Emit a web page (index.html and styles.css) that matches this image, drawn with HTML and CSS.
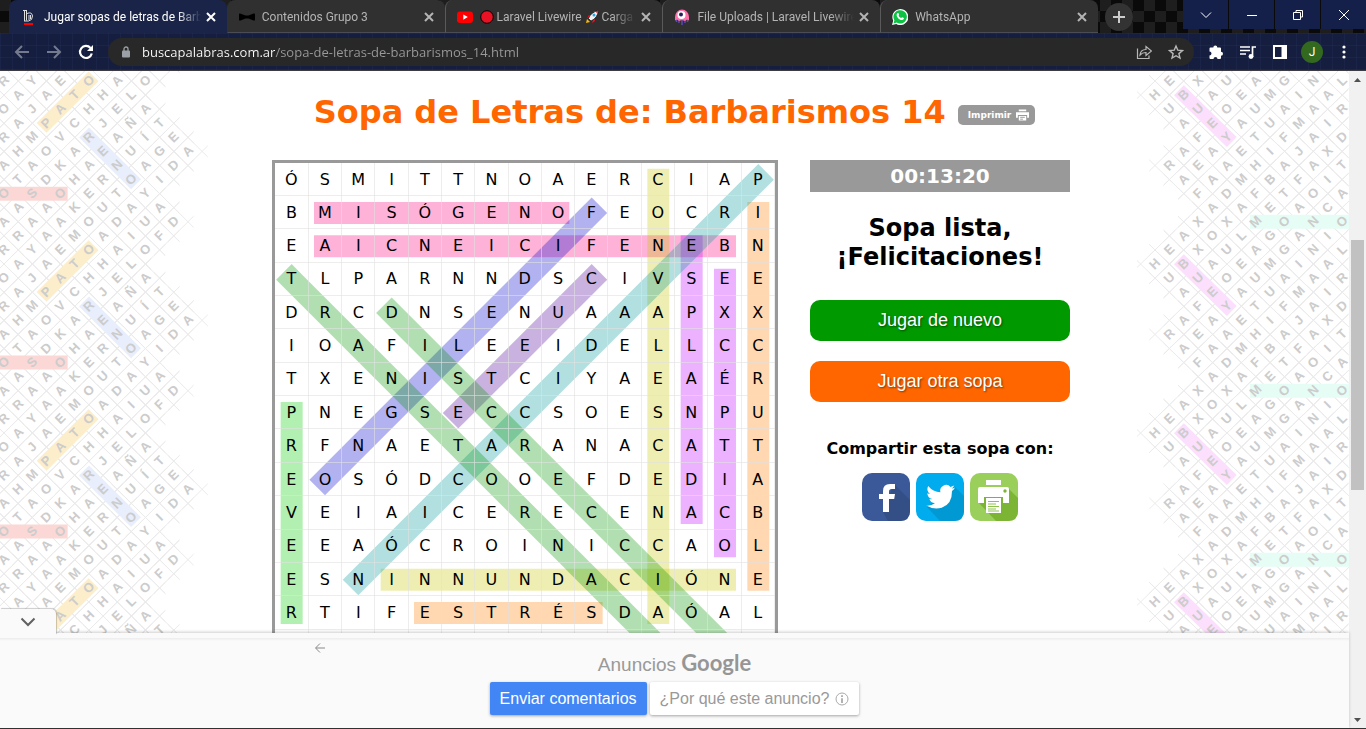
FILE: index.html
```html
<!DOCTYPE html>
<html lang="es">
<head>
<meta charset="utf-8">
<title>Jugar sopas de letras de Barbarismos 14</title>
<link rel="stylesheet" href="styles.css">
</head>
<body>
<header class="browser">
  <div class="tabstrip">
    <div class="tabs">
      <div class="tab tab-active">
        <svg class="favicon" viewBox="0 0 16 16"><g fill="none" stroke="#ddd" stroke-width="1"><path d="M3.5 1v11M5.500 1v10.500M2 1.500h4M6 4.500q5-2 5.500 2.500 0 4.500-4 5H3M8 6v5M9.500 6v4"/></g><path d="M3 14h9v2H3z" fill="#f00"/></svg>
        <span class="tab-title">Jugar sopas de letras de Barb</span>
        <button class="tab-close" aria-label="Cerrar"><svg viewBox="0 0 10 10"><path d="M1 1l8 8M9 1l-8 8"/></svg></button>
      </div>
      <div class="tab">
        <svg class="favicon" viewBox="0 0 16 16"><path d="M1 4.500Q0 4 0 5.500v5Q0 12 1.500 11.500L6.500 9.500h3l5 2q1.500.5 1.500-1v-5Q16 4 14.500 4.500l-5 2h-3z" fill="#000"/></svg>
        <span class="tab-title">Contenidos Grupo 3</span>
        <button class="tab-close" aria-label="Cerrar"><svg viewBox="0 0 10 10"><path d="M1 1l8 8M9 1l-8 8"/></svg></button>
      </div>
      <div class="tab">
        <svg class="favicon" viewBox="0 0 16 16"><rect y="2.500" width="16" height="11.500" rx="3" fill="#f00"/><path d="M6.300 5.500v5.200L10.800 8.100z" fill="#fff"/></svg>
        <span class="tab-title"><svg class="emoji" viewBox="0 0 14 14"><circle cx="7" cy="7" r="6.300" fill="#e81224" stroke="#000"/></svg> Laravel Livewire <svg class="emoji" viewBox="0 0 14 14"><path d="M1 13l1-4 3 3z" fill="#ffb900"/><path d="M2 8l2-3 3 1zM9 7l1 4-3 2z" fill="#e81224"/><path d="M3.500 8.500Q6 2 13.500.5 12.500 8 6 11z" fill="#f2f2f2" stroke="#111" stroke-width=".7"/><path d="M10.500 1.500l2.800-1-1 3z" fill="#e81224"/><circle cx="9" cy="5" r="1.500" fill="#27a9e8"/></svg> Carga</span>
        <button class="tab-close" aria-label="Cerrar"><svg viewBox="0 0 10 10"><path d="M1 1l8 8M9 1l-8 8"/></svg></button>
      </div>
      <div class="tab">
        <svg class="favicon" viewBox="0 0 16 16"><path d="M2.500 9v4M5 10v4M8 10v6M11 10v4M13.500 9v4" stroke="#5a4bb5" stroke-width="1.500"/><path d="M1 11.500V8a7 7.500 0 0 1 14 0v3.500l-2-1-2 1.500-3-1-3 1-2-1.500z" fill="#fb70a9"/><circle cx="7.500" cy="6" r="4" fill="#fff"/><circle cx="7" cy="5.500" r="2" fill="#251f5c"/></svg>
        <span class="tab-title">File Uploads | Laravel Livewire</span>
        <button class="tab-close" aria-label="Cerrar"><svg viewBox="0 0 10 10"><path d="M1 1l8 8M9 1l-8 8"/></svg></button>
      </div>
      <div class="tab">
        <svg class="favicon" viewBox="0 0 16 16"><path d="M0 16l1.200-4.300A8 8 0 1 1 4.300 15z" fill="#fff"/><path d="M1.500 14.500l.9-3.200A6.700 6.700 0 1 1 4.700 13.600z" fill="#0cc143"/><path d="M5.300 4.200c.5-.5 1-.3 1.200.1l.6 1.400c0 .4-.5.7-.6 1 .6 1.200 1.500 2 2.700 2.400.4-.2.700-.9 1.100-.8l1.600.8c.3.9-.6 2-1.800 2-2.800-.1-5.500-3-5.500-5.200 0-.6.300-1.300.7-1.700z" fill="#fff"/></svg>
        <span class="tab-title">WhatsApp</span>
        <button class="tab-close" aria-label="Cerrar"><svg viewBox="0 0 10 10"><path d="M1 1l8 8M9 1l-8 8"/></svg></button>
      </div>
    </div>
    <button class="new-tab" aria-label="Nueva pestaña"><svg viewBox="0 0 12 12"><path d="M6 0v12M0 6h12"/></svg></button>
    <div class="window-buttons">
      <button aria-label="Buscar pestañas"><svg viewBox="0 0 12 12"><path d="M1 3.500l5 5 5-5"/></svg></button>
      <button aria-label="Minimizar"><svg viewBox="0 0 12 12"><path d="M1 6.500h10"/></svg></button>
      <button aria-label="Restaurar"><svg viewBox="0 0 12 12"><path d="M1.500 3.500h7v7h-7zM4 3V1.500h6.500V8H9"/></svg></button>
      <button aria-label="Cerrar ventana"><svg viewBox="0 0 12 12"><path d="M1 1l10 10M11 1L1 11"/></svg></button>
    </div>
  </div>
  <div class="toolbar">
    <button class="tool dim" aria-label="Atrás"><svg viewBox="0 0 16 16"><path d="M15 8H2M8 2L2 8l6 6"/></svg></button>
    <button class="tool dim" aria-label="Adelante"><svg viewBox="0 0 16 16"><path d="M1 8h13M8 2l6 6-6 6"/></svg></button>
    <button class="tool" aria-label="Recargar"><svg viewBox="0 0 16 16"><path d="M13.800 9.500A6 6 0 1 1 12.500 4" stroke-width="2.200"/><path d="M15 1v6H9z" fill="#fff" stroke="none"/></svg></button>
    <div class="omnibox">
      <svg class="lock" viewBox="0 0 10 12"><rect x="1" y="4.500" width="8" height="7" rx="1" fill="#9aa0a6"/><path d="M3 5V3a2 2 0 0 1 4 0v2" fill="none" stroke="#9aa0a6" stroke-width="1.300"/></svg>
      <input class="address" type="text" aria-label="Dirección" value="buscapalabras.com.ar/sopa-de-letras-de-barbarismos_14.html">
      <button class="tool soft" aria-label="Compartir"><svg viewBox="0 0 16 16"><path d="M1.500 4.500v10h11.500v-3M4 11q.5-5.500 6-5.500V2.500L15.500 7 10 11.500V8.500Q6.500 8.300 4 11z" stroke-width="1.200"/></svg></button>
      <button class="tool soft" aria-label="Favorito"><svg viewBox="0 0 16 16"><path d="M8 2l1.800 4.200 4.600.4-3.500 3 1.100 4.500L8 11.700l-4 2.400 1.100-4.500-3.500-3 4.600-.4z" stroke-width="1.400"/></svg></button>
    </div>
    <button class="tool" aria-label="Extensiones"><svg viewBox="0 0 16 16"><path d="M1.500 4.500q0-1 1-1H5.300a2 2 0 1 1 4 0H12q1 0 1 1v3.200a2 2 0 1 1 0 4V14q0 1-1 1H9.500a2 2 0 1 0-4 0H2.500q-1 0-1-1v-2.500a2 2 0 1 0 0-4z" fill="#fff" stroke="none"/></svg></button>
    <button class="tool" aria-label="Control multimedia"><svg viewBox="0 0 16 16"><path d="M0 3h10M0 6.500h10M0 10h6M12.500 13V3H16" stroke-width="1.700"/><circle cx="11" cy="12.500" r="2.400" fill="#fff" stroke="none"/></svg></button>
    <button class="tool" aria-label="Panel lateral"><svg viewBox="0 0 16 16"><path d="M2 2h12v12H2z" stroke-width="2"/><path d="M9.500 2H15v12H9.500z" fill="#fff" stroke="none"/></svg></button>
    <button class="avatar" aria-label="Perfil">J</button>
    <button class="tool" aria-label="Menú"><svg viewBox="0 0 16 16"><g fill="#fff" stroke="none"><circle cx="8" cy="3" r="1.600"/><circle cx="8" cy="8" r="1.600"/><circle cx="8" cy="13" r="1.600"/></g></svg></button>
  </div>
</header>

<div class="viewport">
  <div class="column">
    <main class="page">
      <svg class="wallpaper wallpaper-left" id="left" aria-hidden="true"></svg>
      <svg class="wallpaper wallpaper-right" id="right" aria-hidden="true"></svg>
      <div class="heading">
        <h1>Sopa de Letras de: Barbarismos 14</h1>
        <button class="print">Imprimir <svg viewBox="0 0 14 12"><path d="M3 0h8v2H3zM0 3h14v6h-2V6H2v3H0zM3 7h8v5H3z" fill="#fff"/><path d="M4.500 8.500h5M4.500 10.500h3" stroke="#999"/></svg></button>
      </div>
      <div class="game">
        <div class="board">
          <svg class="marks" id="marks" viewBox="0 0 15 15" aria-hidden="true"></svg>
          <table class="letters" id="letters"></table>
        </div>
        <aside class="side">
          <div class="timer">00:13:20</div>
          <h2>Sopa lista,<br>¡Felicitaciones!</h2>
          <button class="play play-green">Jugar de nuevo</button>
          <button class="play play-orange">Jugar otra sopa</button>
          <h3>Compartir esta sopa con:</h3>
          <div class="share">
            <a href="#facebook" aria-label="Facebook"><svg viewBox="0 0 48 48"><rect width="48" height="48" rx="10" fill="#3b5998"/><path d="M32 11l16 16v11q0 10-10 10H26l-5-9z" fill="#344e86"/><path d="M21 39V26h-4v-5h4v-3q0-7 7-7h5v5h-3.500q-2.500 0-2.500 2.500V21h6l-.8 5H27v13z" fill="#fff"/></svg></a>
            <a href="#twitter" aria-label="Twitter"><svg viewBox="0 0 48 48"><rect width="48" height="48" rx="10" fill="#00aced"/><path d="M38 13l10 10v15q0 10-10 10H24L11 34z" fill="#0099d4"/><path d="M39 14.500q-1.500.9-3.400 1.100 1.900-1.100 2.600-3.100-1.700 1-3.700 1.400A5.900 5.900 0 0 0 24.400 19.300Q17 19 12.200 13q-2.500 4.700 1.800 7.900-1.400 0-2.700-.7.200 4.500 4.800 5.800-1.300.4-2.700.1 1.300 3.700 5.500 4.100-3.700 2.800-8.700 2.400 7.300 4.400 15.500 2.200Q36.300 31 36 18q1.900-1.300 3-3.500z" fill="#fff"/></svg></a>
            <a href="#print" aria-label="Imprimir"><svg viewBox="0 0 48 48"><rect width="48" height="48" rx="10" fill="#9bcf5c"/><path d="M39 16l9 9v13q0 10-10 10H26L9 30l7-16z" fill="#7cb534"/><path d="M16 7h15v5H16zM10 14h27q2 0 2 2v14h-6v-6H14v6H8V16q0-2 2-2zM16 25h15v15H16z" fill="#fff"/><circle cx="35" cy="18" r="1.700" fill="#7cb534"/><path d="M18 28.500h11M18 31h8M18 33.500h11M18 36h8M18 38h11" stroke="#8dc34a" stroke-width="1"/></svg></a>
          </div>
        </aside>
      </div>
    </main>
    <section class="ad">
      <button class="ad-toggle" aria-label="Ocultar anuncio"><svg viewBox="0 0 16 10"><path d="M1.500 1.500L8 8l6.500-6.500"/></svg></button>
      <button class="ad-back" aria-label="Volver"><svg viewBox="0 0 10 10"><path d="M10 5H1M5 .5L.5 5 5 9.500"/></svg></button>
      <div class="ad-title">Anuncios <span class="brand">Google</span></div>
      <div class="ad-actions">
        <button class="ad-send">Enviar comentarios</button>
        <button class="ad-why">¿Por qué este anuncio? <svg viewBox="0 0 14 14"><circle cx="7" cy="7" r="6"/><path d="M7 6.200V11M7 3.200v1.800" stroke-width="1.800"/></svg></button>
      </div>
    </section>
  </div>
  <div class="scrollbar">
    <svg class="arrow" viewBox="0 0 17 17"><path d="M5 11l3.500-4 3.500 4z"/></svg>
    <div class="space-above"></div>
    <div class="thumb"></div>
    <div class="space-below"></div>
    <svg class="arrow" viewBox="0 0 17 17"><path d="M5 7l3.500 4L12 7z"/></svg>
  </div>
</div>
<script src="app.js"></script>
</body>
</html>
```

FILE: styles.css
```css
* { box-sizing: border-box; }
body {
  margin: 0;
  height: 100vh;
  display: flex;
  flex-direction: column;
  overflow: hidden;
  background: #fff;
  font-family: "DejaVu Sans", Verdana, sans-serif;
  color: #000;
}
button { border: 0; padding: 0; margin: 0; background: none; font: inherit; color: inherit; }
h1, h2, h3 { margin: 0; }
svg { display: block; flex: none; }

/* browser frame */
.browser { font-family: Roboto, "Open Sans", sans-serif; flex: none; }
.tabstrip {
  height: 33px;
  display: flex;
  align-items: flex-start;
  padding-left: 9px;
  background: repeating-conic-gradient(#0a0a0a 0 25%, #1e1e1e 0 50%) 0 0 / 22px 22px;
}
.tabs { flex: 0 1 1089px; min-width: 0; display: flex; }
.tab {
  flex: 1 1 0;
  min-width: 0;
  height: 33px;
  display: flex;
  align-items: center;
  padding: 1px 11px 0 11px;
  background: #303030;
  border-bottom: 1px solid #4a4d55;
  border-left: 1px solid #5a5a5a;
  border-radius: 8px 8px 0 0;
  color: #b4b4b4;
}
.tab-active { background: #1a2448; border-color: #1a2448; color: #fff; }
.tab-active + .tab { border-left-color: #303030; }
.favicon { width: 16px; height: 16px; }
.tab-title {
  flex: 1;
  min-width: 0;
  height: 20px;
  margin: 0 5px 0 7px;
  font-size: 12px;
  line-height: 20px;
  white-space: nowrap;
  overflow: hidden;
  -webkit-mask-image: linear-gradient(90deg, #000 calc(100% - 24px), transparent);
  mask-image: linear-gradient(90deg, #000 calc(100% - 24px), transparent);
}
.emoji { display: inline-block; width: 14px; height: 14px; vertical-align: -3px; }
.tab-close svg { width: 10px; height: 10px; fill: none; stroke: currentColor; stroke-width: 2; }
.new-tab {
  flex: none;
  width: 28px;
  height: 28px;
  margin: 3px 0 0 7px;
  border-radius: 50%;
  background: #333;
  display: grid;
  place-items: center;
}
.new-tab svg { width: 12px; height: 12px; stroke: #ccc; stroke-width: 2; }
.window-buttons { flex: none; margin-left: auto; display: flex; gap: 1px; background: #0a0a0a; }
.window-buttons button { width: 45px; height: 29px; display: grid; place-items: center; background: #15204a; }
.window-buttons svg { width: 12px; height: 12px; fill: none; stroke: #fff; stroke-width: 1; }
.toolbar {
  height: 38px;
  display: flex;
  align-items: center;
  gap: 16px;
  padding: 0 14px;
  background-color: #151e3f;
  background-image: linear-gradient(rgba(70, 90, 150, .1) 1px, transparent 1px), linear-gradient(90deg, rgba(70, 90, 150, .1) 1px, transparent 1px);
  background-size: 12px 12px;
  border-bottom: 1px solid #3c3c42;
}
.tool { flex: none; width: 16px; height: 16px; }
.tool svg { width: 16px; height: 16px; fill: none; stroke: #fff; stroke-width: 2; }
.dim svg { stroke: #747b8f; }
.soft svg { stroke: #b8b8b8; }
.omnibox {
  flex: 1;
  min-width: 0;
  height: 28px;
  margin: 0 -2px 0 -2px;
  padding: 0 10px 0 13px;
  border-radius: 14px;
  background: #282828;
  display: flex;
  align-items: center;
  gap: 16px;
}
.lock { width: 10px; height: 12px; margin-right: -5px; }
.address {
  flex: 1;
  min-width: 0;
  height: 20px;
  border: 0;
  padding: 0;
  font: 13px/20px "Open Sans", "Noto Sans", sans-serif;
  background: linear-gradient(90deg, #fff 133px, #9a9a9a 133px);
  -webkit-background-clip: text;
  background-clip: text;
  color: transparent;
}
.avatar {
  flex: none;
  width: 22px;
  height: 22px;
  margin: 0 -3px;
  border-radius: 50%;
  background: #33691e;
  color: #fff;
  font-size: 12px;
  line-height: 22px;
}

/* page */
.viewport { flex: 1; min-height: 0; display: flex; border-bottom: 1px solid #333; }
.column { flex: 1; min-width: 0; display: flex; flex-direction: column; }
.page { flex: 1; min-height: 0; overflow: hidden; position: relative; }
.wallpaper { position: absolute; top: 0; width: 212px; height: 600px; z-index: -1; overflow: hidden; }
.wallpaper-left { left: 0; }
.wallpaper-right { right: 0; }
.wallpaper text { font: bold 13px "Liberation Sans", Arial, sans-serif; fill: #ccc; }
.wallpaper .grid { fill: none; stroke: #ebebeb; stroke-width: 1; }
.wallpaper .mark { fill: none; stroke-width: 14; }

.heading { display: flex; justify-content: center; align-items: center; gap: 12px; padding-top: 21px; }
.heading h1 { font-size: 32px; line-height: 40px; color: #f60; white-space: nowrap; }
.print {
  height: 20px;
  margin-top: 5px;
  padding: 0 6px 0 10px;
  border-radius: 5px;
  background: #999;
  color: #fff;
  font-size: 9px;
  font-weight: bold;
  display: flex;
  align-items: center;
  gap: 5px;
}
.print svg { width: 13px; height: 12px; }
.game { display: flex; justify-content: center; gap: 32px; padding: 28px 7px 0 0; }
.board { position: relative; flex: none; border: 3px solid #999; }
.marks { position: absolute; inset: 0; width: 100%; height: 100%; }
.marks line { stroke-width: .66; stroke-linecap: square; stroke-opacity: .3; }
.letters { position: relative; width: 500px; height: 500px; table-layout: fixed; border-collapse: collapse; }
.letters td {
  padding: 1px 0 0;
  text-align: center;
  font-size: 16px;
  line-height: 20px;
  border-right: 1px solid rgba(225, 225, 225, .6);
  border-bottom: 1px solid rgba(225, 225, 225, .6);
}
.side { width: 260px; display: flex; flex-direction: column; text-align: center; }
.timer { background: #999; color: #fff; font-size: 20px; font-weight: bold; line-height: 32px; }
.side h2 { margin-top: 22px; font-size: 24px; line-height: 29px; }
.play {
  height: 41px;
  border-radius: 10px;
  color: #fff;
  font: 18px "Liberation Sans", Arial, sans-serif;
  text-shadow: 1px 1px 2px rgba(0, 0, 0, .5);
}
.play-green { margin-top: 28px; background: #090; }
.play-orange { margin-top: 20px; background: #f60; }
.side h3 { margin-top: 37px; font-size: 16px; line-height: 20px; white-space: nowrap; }
.share { display: flex; justify-content: center; gap: 6px; margin-top: 14px; }
.share svg { width: 48px; height: 48px; }

/* ad bar */
.ad {
  flex: none;
  position: relative;
  height: 95px;
  padding-top: 17px;
  background: linear-gradient(#fafafa 5px, #ececec 5px, #fafafa 8px);
  box-shadow: 0 -1px 3px rgba(0, 0, 0, .2);
  font-family: "Liberation Sans", Arial, sans-serif;
  color: #999;
}
.ad-toggle {
  position: absolute;
  left: 0;
  top: -24px;
  width: 56px;
  height: 26px;
  background: #fafafa;
  border-radius: 0 5px 0 0;
  box-shadow: 1px -1px 1px rgba(0, 0, 0, .2);
  display: grid;
  place-items: center;
}
.ad-toggle svg { width: 16px; height: 10px; fill: none; stroke: #616161; stroke-width: 2; }
.ad-back { position: absolute; left: 315px; top: 10px; }
.ad-back svg { width: 10px; height: 10px; fill: none; stroke: #888; stroke-width: 1; }
.ad-title { text-align: center; font-size: 19px; line-height: 25px; }
.brand { font-family: Lato, sans-serif; font-weight: bold; font-size: 22px; color: #969696; }
.ad-actions { display: flex; justify-content: center; gap: 3px; margin-top: 5px; }
.ad-actions button { height: 33px; border-radius: 2px; box-shadow: 0 1px 3px rgba(0, 0, 0, .35); font-size: 16px; display: flex; align-items: center; }
.ad-actions .ad-send { padding: 0 10px; background: #4285f4; color: #fff; }
.ad-actions .ad-why { padding: 0 10px; background: #fff; gap: 6px; }
.ad-why svg { width: 14px; height: 14px; fill: none; stroke: #aaa; }

.scrollbar { flex: none; width: 17px; background: #f1f1f1; display: flex; flex-direction: column; }
.arrow { width: 17px; height: 17px; fill: #505050; }
.space-above { flex: 152; }
.thumb { flex: 250; margin: 0 2px; background: #c1c1c1; }
.space-below { flex: 221; }
```

FILE: app.js
```js
const SVG = "http://www.w3.org/2000/svg";

function draw(parent, name, attributes, text) {
  const node = document.createElementNS(SVG, name);
  for (const key in attributes) node.setAttribute(key, attributes[key]);
  if (text) node.textContent = text;
  parent.appendChild(node);
}

/* Board letters, one string per row; the last row stays behind the ad bar. */
const blank = "\u00a0";
const rows = [
  "ÓSMITTNOAERCIAP", "BMISÓGENOFEOCRI", "EAICNEICIFENEBN", "TLPARNNDSCIVSEE",
  "DRCDNSENUAAAPXX", "IOAFILEEIDELLCC", "TXENISTCIYAEAÉR", "PNEGSECCSOESNPU",
  "RFNAETARANACATT", "EOSÓDCOOEFDEDIA", "VEIAICERECENACB", "EEAÓCROINICCAOL",
  "ESNINNUNDACIÓNE", "RTIFESTRÉSDAÓAL", blank.repeat(15)
];
const table = document.getElementById("letters");
for (const row of rows) {
  const tr = table.insertRow();
  for (const letter of row) tr.insertCell().textContent = letter;
}

/* Found words: first column, first row, last column, last row, colour. */
const words = [
  [1, 1, 8, 1, "#ff007d"], [1, 2, 13, 2, "#ff007d"], [11, 0, 11, 13, "#c8c800"],
  [12, 2, 12, 10, "#c300ff"], [13, 3, 13, 11, "#c300ff"], [14, 1, 14, 12, "#ff7d00"],
  [0, 7, 0, 13, "#00cd00"], [4, 13, 9, 13, "#ff7d00"], [3, 12, 13, 12, "#c8c800"],
  [9, 1, 1, 9, "#0000cd"], [9, 3, 5, 7, "#4b0096"], [14, 0, 2, 12, "#009696"],
  [0, 3, 11, 14, "#009600"], [3, 4, 13, 14, "#009600"]
];
const marks = document.getElementById("marks");
for (const [x1, y1, x2, y2, stroke] of words) {
  draw(marks, "line", { x1: x1 + .5, y1: y1 + .5, x2: x2 + .5, y2: y2 + .5, stroke });
}

/* Decorative side pattern: diagonal letter grid repeated every 12 rows. */
function wallpaper(id, lines, startX, startY, stepX, bands) {
  const svg = document.getElementById(id);
  const step = 14.08;
  const period = 12 * step;
  const grid = [], glyphs = [];
  for (let tile = -1; tile < 4; tile++) {
    lines.forEach((line, r) => {
      [...line].forEach((letter, c) => {
        if (letter === " ") return;
        const x = startX + c * stepX, y = startY + tile * period + r * step;
        const o = .4;
        for (const [a, b, d, e] of [[-1 - o, -o, o, 1 + o], [-o, -1 - o, 1 + o, o], [-1 - o, o, o, -1 - o], [-o, 1 + o, 1 + o, -o]]) {
          grid.push(`M${x + a * stepX} ${y + b * step}L${x + d * stepX} ${y + e * step}`);
        }
        if (y > 0 && y < 566) glyphs.push([x, y, letter]);
      });
    });
  }
  draw(svg, "path", { class: "grid", d: grid.join("") });
  for (let tile = -1; tile < 4; tile++) {
    for (const [x1, y1, x2, y2, stroke] of bands) {
      const dy = tile * period + startY;
      draw(svg, "line", { class: "mark", x1: startX + x1 * stepX, y1: dy + y1 * step, x2: startX + x2 * stepX, y2: dy + y2 * step, stroke });
    }
  }
  for (const [x, y, letter] of glyphs) draw(svg, "text", { x, y: y + 4, "text-anchor": "middle", transform: `rotate(-45 ${x} ${y})` }, letter);
}
wallpaper("left", [
  "R Y E O A O", " A A T H L", "O J A H E A", " A P C J Ñ T", "R M V R A Í E", " H O A E U G A",
  "A A K A N A D", " T D H R O I", "O S O E T Y", " A A K U A A", "A A A O D U D", " R A M A I F"
], 4, 10, 14.15, [
  [2.66, 3.33, 6.33, -.33, "#fdeecb"], [5.66, 3.66, 9.33, 7.33, "#e8eefc"], [-1, 8, 4.5, 8, "#fbd8d6"]
]);
wallpaper("right", [
  " E X U A G N L", "H B A E M I A", " U U O U A A R", "  A E A U M I", "   F Y T F A D", "  A A E I J X",
  " R E A H A A T", "  A A M B F I", "   F D F T O A", "    A A E A C", "   X X M O N O", "  A O L G A I"
], 18, 10, 14.4, [
  [1.66, .66, 5.33, 4.33, "#fcdffc"], [6.6, 10, 15, 10, "#e6fdf6"]
]);
```
